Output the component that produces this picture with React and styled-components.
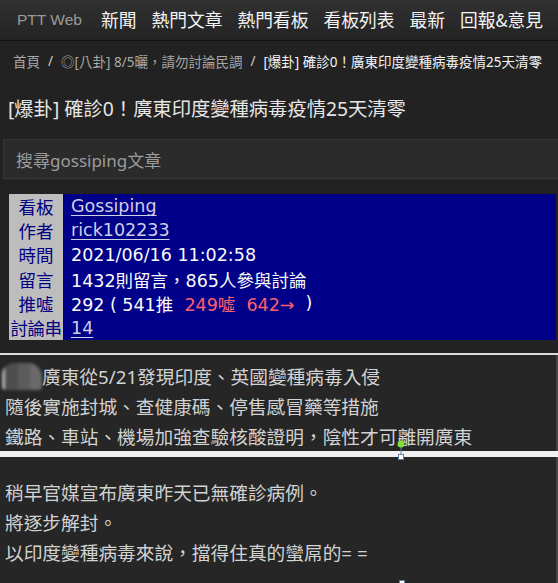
import React from "react";
import styled, { createGlobalStyle } from "styled-components";

const GlobalStyle = createGlobalStyle`
  html, body { margin: 0; padding: 0; background: #222; }
  body { font-family: "Noto Sans", "Noto Sans CJK TC", sans-serif; }
`;

const SANS = `"Noto Sans", "Noto Sans CJK TC", sans-serif`;
const META = `"DejaVu Sans", "Noto Sans CJK TC", sans-serif`;

const Page = styled.div`
  position: relative;
  width: 558px;
  height: 583px;
  overflow: hidden;
  background: #222;
  font-family: ${SANS};
`;

const NavBar = styled.nav`
  height: 41px;
  box-sizing: border-box;
  display: flex;
  align-items: center;
  padding-left: 17px;
  white-space: nowrap;
  background: linear-gradient(#313131, #232323);
  border-bottom: 1px solid #121212;
`;

const Brand = styled.span`
  flex-shrink: 0;
  font-family: "Liberation Sans", Arial, sans-serif;
  font-size: 15.5px;
  color: #9a9a9a;
  margin-right: 19px;
`;

const NavItem = styled.span`
  flex-shrink: 0;
  font-family: "Noto Sans CJK TC", sans-serif;
  font-size: 17.75px;
  color: #f4f4f4;
  margin-right: 15px;
  line-height: 1;
`;

const Breadcrumb = styled.div`
  height: 40px;
  display: flex;
  align-items: center;
  padding-left: 13px;
  font-size: 13.5px;
  color: #a8a8a8;
  white-space: nowrap;
  font-family: ${SANS};
`;

const Crumb = styled.span`
  color: ${(p) => (p.$current ? "#f4f4f4" : "#a8a8a8")};
`;

const Sep = styled.span`
  color: #cfcfcf;
  margin: 0 8px;
`;

const Title = styled.h1`
  margin: 0;
  padding: 13px 0 0 8px;
  height: 58px;
  box-sizing: border-box;
  font-family: ${SANS};
  font-weight: 400;
  font-size: 19.3px;
  line-height: 30px;
  color: #e6e6e6;
  white-space: nowrap;
`;

const SearchBox = styled.div`
  margin: 0 -4px 15px 3px;
  height: 40px;
  box-sizing: border-box;
  background: #2b2b2b;
  border: 1px solid #363636;
  display: flex;
  align-items: center;
  padding-left: 12px;
  font-family: ${SANS};
  font-size: 17px;
  color: #9c9c9c;
`;

const MetaTable = styled.div`
  margin: 0 2px 0 9px;
  display: grid;
  grid-template-columns: 54px 1fr;
  grid-auto-rows: 24.3px;
  background: #000088;
  font-family: ${META};
  font-size: 17.5px;
`;

const MetaLabel = styled.div`
  background: #bdbdbd;
  color: #000080;
  display: flex;
  align-items: center;
  justify-content: center;
  font-family: ${SANS};
  white-space: nowrap;
  letter-spacing: ${(p) => (p.$tight ? "-0.5px" : "0")};
`;

const MetaValue = styled.div`
  color: #fafafa;
  display: flex;
  align-items: center;
  padding-left: 8px;
  white-space: nowrap;
`;

const MetaLink = styled.span`
  color: #cfcfe6;
  text-decoration: underline;
  text-underline-offset: 3px;
`;

const Red = styled.span`
  color: #ff5f6d;
`;

const Gap = styled.div`
  height: 13px;
`;

const Divider = styled.div`
  height: ${(p) => p.$h}px;
  background: ${(p) => p.$c};
`;

const Block = styled.div`
  background: #262626;
  border-right: 2px solid #444;
  height: ${(p) => p.$h}px;
  padding: ${(p) => p.$pt}px 0 0 5px;
  box-sizing: border-box;
  font-family: ${SANS};
  font-size: 18.7px;
  line-height: 30px;
  color: #d2d2d2;
  white-space: nowrap;
`;

const Line = styled.div``;

const Blur = styled.span`
  display: inline-block;
  vertical-align: middle;
  width: 40px;
  height: 27px;
  margin: -4px 0 0 -3px;
  border-radius: 12px 14px 4px 4px;
  background: linear-gradient(90deg, #b8b8b8 0 3px, #4e4e4e 3px 16px, #5c5c5c 16px 28px, #6a6a6a 28px);
  filter: blur(1.5px);
`;

const Handle = styled.svg`
  position: absolute;
  left: 394px;
  top: 438px;
`;

const BottomHandle = styled.svg`
  position: absolute;
  left: 396px;
  top: 578px;
`;

const meta = [
  ["看板", <MetaLink>Gossiping</MetaLink>],
  ["作者", <MetaLink>rick102233</MetaLink>],
  ["時間", "2021/06/16 11:02:58"],
  ["留言", "1432則留言，865人參與討論"],
  [
    "推噓",
    <>
      292 (&nbsp;541推&nbsp; <Red>&nbsp;249噓&nbsp; 642→</Red>&nbsp; )
    </>,
  ],
  ["討論串", <MetaLink>14</MetaLink>],
];

export default function App() {
  return (
    <Page>
      <GlobalStyle />
      <NavBar>
        <Brand>PTT Web</Brand>
        {["新聞", "熱門文章", "熱門看板", "看板列表", "最新", "回報&意見"].map((t) => (
          <NavItem key={t}>{t}</NavItem>
        ))}
      </NavBar>
      <Breadcrumb>
        <Crumb>首頁</Crumb>
        <Sep>/</Sep>
        <Crumb>◎[八卦] 8/5曬，請勿討論民調</Crumb>
        <Sep>/</Sep>
        <Crumb $current>[爆卦] 確診0！廣東印度變種病毒疫情25天清零</Crumb>
      </Breadcrumb>
      <Title>[爆卦] 確診0！廣東印度變種病毒疫情25天清零</Title>
      <SearchBox>搜尋gossiping文章</SearchBox>
      <MetaTable>
        {meta.map(([k, v]) => (
          <React.Fragment key={k}>
            <MetaLabel $tight={k.length > 2}>{k}</MetaLabel>
            <MetaValue>{v}</MetaValue>
          </React.Fragment>
        ))}
      </MetaTable>
      <Gap />
      <Divider $h={2} $c="#dcdcdc" />
      <Block $h={96} $pt={7}>
        <Line>
          <Blur />廣東從5/21發現印度、英國變種病毒入侵
        </Line>
        <Line>隨後實施封城、查健康碼、停售感冒藥等措施</Line>
        <Line>鐵路、車站、機場加強查驗核酸證明，陰性才可離開廣東</Line>
      </Block>
      <Divider $h={6} $c="#f1f1f1" />
      <Block $h={130} $pt={21}>
        <Line>稍早官媒宣布廣東昨天已無確診病例。</Line>
        <Line>將逐步解封。</Line>
        <Line>以印度變種病毒來說，擋得住真的蠻屌的= =</Line>
      </Block>
      <Handle width="14" height="24" viewBox="0 0 14 24">
        <line x1="7" y1="6" x2="7" y2="18" stroke="#5b7fa6" strokeWidth="1" />
        <circle cx="7" cy="6" r="3.5" fill="#7fe03a" />
        <rect x="4.5" y="16.5" width="5" height="5" fill="#fff" stroke="#5b7fa6" strokeWidth="1" />
      </Handle>
      <BottomHandle width="12" height="8" viewBox="0 0 12 8">
        <rect x="3.5" y="2.5" width="5" height="5" fill="#fff" stroke="#5b7fa6" strokeWidth="1" />
      </BottomHandle>
    </Page>
  );
}
